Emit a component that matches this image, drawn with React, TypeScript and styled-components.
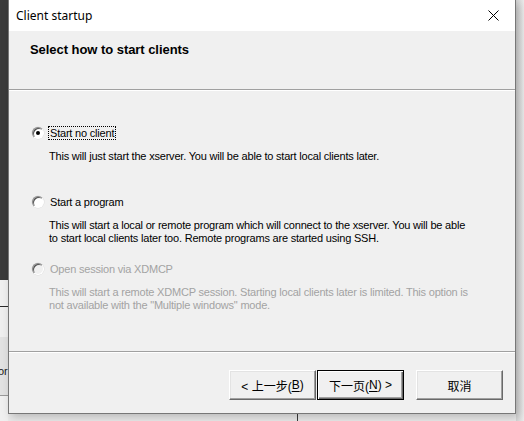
import React from "react";
import styled, { createGlobalStyle, css } from "styled-components";

const Global = createGlobalStyle`
  html, body { margin: 0; padding: 0; }
  body { background: #eeeeee; overflow: hidden; }
  #root { width: 524px; height: 421px; }
`;

const Page = styled.div`
  display: flex;
  width: 524px;
  height: 421px;
  overflow: hidden;
  background: #ededed;
`;

const LeftStrip = styled.div`
  display: flex;
  flex-direction: column;
  width: 8px;
  flex: none;
  overflow: hidden;
`;

const Segment = styled.div<{ $h: number; $bg: string }>`
  height: ${(p) => p.$h}px;
  background: ${(p) => p.$bg};
  flex: none;
  overflow: hidden;
  white-space: nowrap;
  font: 11px "Liberation Sans", Arial, sans-serif;
  color: #1a1a1a;
`;

const ClippedText = styled.span`
  display: block;
  margin: 28px 0 0 -2px;
  line-height: 13px;
`;

const CenterCol = styled.div`
  display: flex;
  flex-direction: column;
  width: 508px;
  flex: none;
`;

const Window = styled.div`
  width: 508px;
  height: 414px;
  box-sizing: border-box;
  border: 1px solid #777777;
  border-top: none;
  background: #f0f0f0;
  display: flex;
  flex-direction: column;
  box-shadow: 3px 3px 9px rgba(0, 0, 0, 0.22);
  position: relative;
  z-index: 1;
`;

const TitleBar = styled.div`
  height: 31px;
  flex: none;
  background: #ffffff;
  display: flex;
  align-items: center;
  justify-content: space-between;
  padding: 0 0 0 7px;
`;

const TitleText = styled.span`
  font: 12px "Noto Sans", "Open Sans", sans-serif;
  color: #000;
  margin-top: -1px;
`;

const CloseButton = styled.div`
  width: 46px;
  height: 31px;
  display: flex;
  align-items: center;
  justify-content: center;
  margin-right: -1px;
`;

const Header = styled.div`
  height: 58px;
  flex: none;
  padding: 12px 0 0 21px;
  box-sizing: border-box;
  background: #f0f0f0;
`;

const Heading = styled.div`
  font: bold 13px "Liberation Sans", Arial, sans-serif;
  letter-spacing: -0.05px;
  line-height: 14px;
  color: #000;
`;

const Separator = styled.div`
  height: 1px;
  flex: none;
  background: #a0a0a0;
  border-bottom: 1px solid #ffffff;
`;

const Body = styled.div`
  height: 260px;
  flex: none;
  box-sizing: border-box;
  padding: 35px 0 0 23px;
  font: 11px "Liberation Sans", Arial, sans-serif;
  letter-spacing: -0.2px;
  color: #000;
`;

const OptionBlock = styled.div<{ $h: number }>`
  height: ${(p) => p.$h}px;
`;

const RadioRow = styled.div<{ $disabled?: boolean }>`
  display: flex;
  align-items: center;
  gap: 4px;
  height: 14px;
  color: ${(p) => (p.$disabled ? "#a3a3a3" : "#000")};
`;

const RadioCircle = styled.span<{ $disabled?: boolean }>`
  width: 12px;
  height: 12px;
  box-sizing: border-box;
  border-radius: 50%;
  border: 1px solid;
  border-color: #8a8a8a #ffffff #ffffff #8a8a8a;
  background: ${(p) => (p.$disabled ? "#f0f0f0" : "#ffffff")};
  box-shadow: inset 1px 1px 0 #505050, 0 0 0 0.5px #dcdcdc;
  display: flex;
  align-items: center;
  justify-content: center;
  flex: none;
`;

const RadioDot = styled.span`
  width: 4px;
  height: 4px;
  border-radius: 50%;
  background: #000;
`;

const Label = styled.span<{ $focused?: boolean }>`
  line-height: 12px;
  padding: 0 1px;
  border: 1px dotted transparent;
  ${(p) =>
    p.$focused &&
    css`
      border-color: #000;
    `}
`;

const Desc = styled.div<{ $disabled?: boolean }>`
  margin: 10px 0 0 17px;
  line-height: 13px;
  white-space: nowrap;
  color: ${(p) => (p.$disabled ? "#a3a3a3" : "#000")};
`;

const Footer = styled.div`
  flex: 1;
  display: flex;
  justify-content: flex-end;
  align-items: flex-start;
  padding: 17px 12px 0 0;
`;

const Button = styled.div<{ $default?: boolean; $gap?: number }>`
  width: 87px;
  height: 30px;
  box-sizing: border-box;
  margin-left: ${(p) => p.$gap ?? 0}px;
  background: #f0f0f0;
  border: 1px solid;
  border-color: #ffffff #696969 #696969 #ffffff;
  box-shadow: inset -1px -1px 0 #a0a0a0, inset 1px 1px 0 #e3e3e3;
  display: flex;
  align-items: center;
  justify-content: center;
  font: 12px "Liberation Sans", "Noto Sans CJK SC", sans-serif;
  color: #000;
  ${(p) =>
    p.$default &&
    css`
      border: 1px solid #000;
      box-shadow: inset 1px 1px 0 #ffffff, inset -1px -1px 0 #696969,
        inset -2px -2px 0 #a0a0a0;
    `}
`;

const Key = styled.span`
  text-decoration: underline;
  text-underline-offset: 2px;
`;

const BottomStrip = styled.div`
  flex: 1;
  padding-left: 289px;
  background: #eaeaea;
`;

const VLine = styled.div`
  width: 1px;
  height: 100%;
  background: #3a3a3a;
`;

const RightArea = styled.div`
  flex: 1;
  background: linear-gradient(90deg, #d4d4d4, #ececec);
`;

function Radio({ checked, disabled }: { checked?: boolean; disabled?: boolean }) {
  return <RadioCircle $disabled={disabled}>{checked && <RadioDot />}</RadioCircle>;
}

export default function App() {
  return (
    <>
      <Global />
      <Page>
        <LeftStrip>
          <Segment $h={280} $bg="#3b3b3b" />
          <Segment $h={26} $bg="#f0f0f0" />
          <Segment $h={1} $bg="#2a2a2a" />
          <Segment $h={30} $bg="#efefef" />
          <Segment $h={58} $bg="#e2e2e2">
            <ClippedText>or</ClippedText>
          </Segment>
          <Segment $h={1} $bg="#9a9a9a" />
          <Segment $h={25} $bg="#f0f0f0" />
        </LeftStrip>
        <CenterCol>
          <Window>
            <TitleBar>
              <TitleText>Client startup</TitleText>
              <CloseButton>
                <svg width="11" height="11" viewBox="0 0 11 11">
                  <path d="M0.5 0.5 L10.5 10.5 M10.5 0.5 L0.5 10.5" stroke="#000" strokeWidth="1" fill="none" />
                </svg>
              </CloseButton>
            </TitleBar>
            <Header>
              <Heading>Select how to start clients</Heading>
            </Header>
            <Separator />
            <Body>
              <OptionBlock $h={69}>
                <RadioRow>
                  <Radio checked />
                  <Label $focused>Start no client</Label>
                </RadioRow>
                <Desc>This will just start the xserver. You will be able to start local clients later.</Desc>
              </OptionBlock>
              <OptionBlock $h={67}>
                <RadioRow>
                  <Radio />
                  <Label>Start a program</Label>
                </RadioRow>
                <Desc>
                  This will start a local or remote program which will connect to the xserver. You will be able
                  <br />
                  to start local clients later too. Remote programs are started using SSH.
                </Desc>
              </OptionBlock>
              <OptionBlock $h={68}>
                <RadioRow $disabled>
                  <Radio disabled />
                  <Label>Open session via XDMCP</Label>
                </RadioRow>
                <Desc $disabled>
                  This will start a remote XDMCP session. Starting local clients later is limited. This option is
                  <br />
                  not available with the "Multiple windows" mode.
                </Desc>
              </OptionBlock>
            </Body>
            <Separator />
            <Footer>
              <Button>
                &lt; 上一步(<Key>B</Key>)
              </Button>
              <Button $default $gap={1}>
                下一页(<Key>N</Key>) &gt;
              </Button>
              <Button $gap={12}>取消</Button>
            </Footer>
          </Window>
          <BottomStrip>
            <VLine />
          </BottomStrip>
        </CenterCol>
        <RightArea />
      </Page>
    </>
  );
}
